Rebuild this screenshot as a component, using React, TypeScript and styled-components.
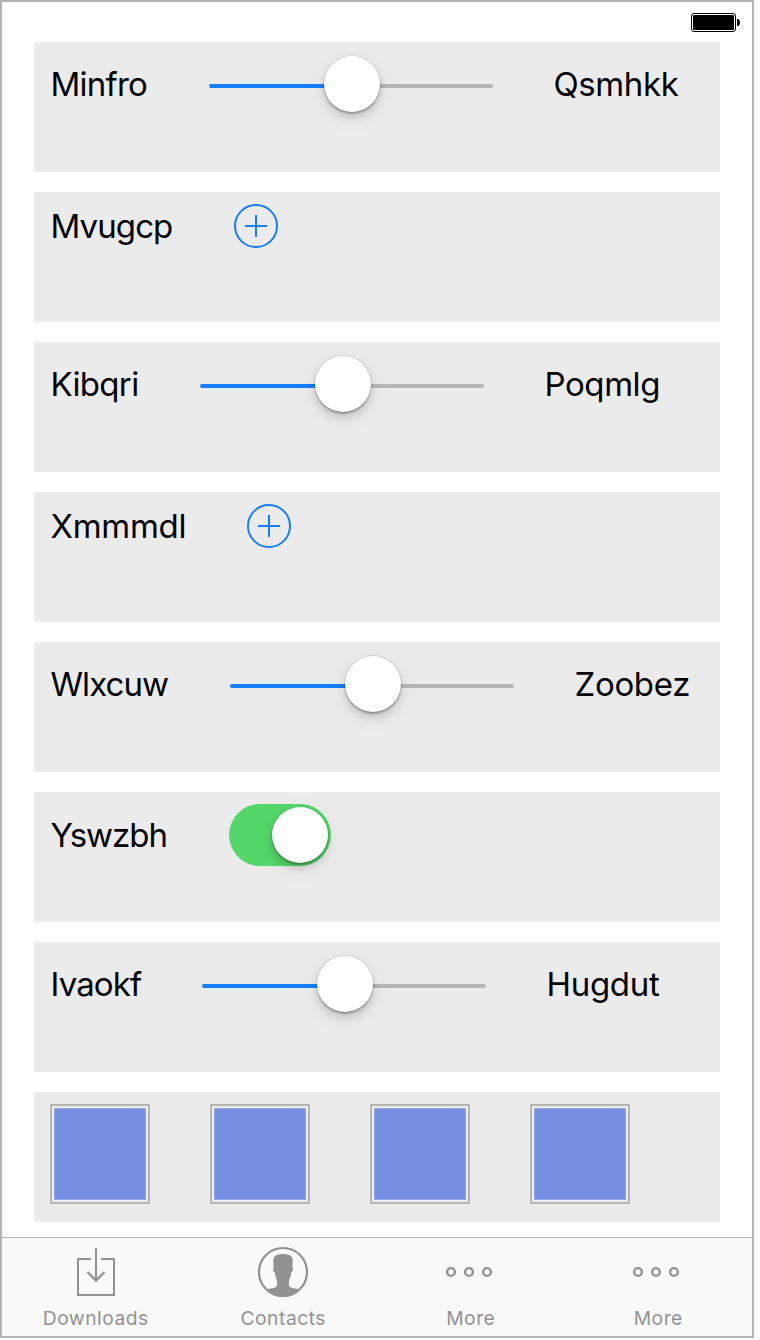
import React from "react";
import styled, { createGlobalStyle } from "styled-components";

const GlobalStyle = createGlobalStyle`
  * { box-sizing: border-box; }
  body { margin: 0; background: #fff; }
`;

const Phone = styled.div`
  display: flex;
  flex-direction: column;
  width: 754px;
  height: 1338px;
  border: 2px solid #b2b2b2;
  background: #fff;
  font-family: Inter, "Liberation Sans", sans-serif;
  color: #000;
`;

const StatusBar = styled.header`
  display: flex;
  justify-content: flex-end;
  height: 40px;
  padding: 11px 12px 0 0;
`;

const List = styled.main`
  display: flex;
  flex: 1;
  flex-direction: column;
  gap: 20px;
  padding: 0 32px;
`;

const Cell = styled.section`
  height: 130px;
  padding: 12px 16px;
  background: #ebebeb;
`;

const Row = styled.div`
  display: flex;
  align-items: center;
  gap: 60px;
`;

const Label = styled.span<{ $width: number; $spacing: number }>`
  flex: none;
  width: ${(p) => p.$width}px;
  padding-left: 0.5px;
  font-size: 33px;
  line-height: 40px;
  letter-spacing: ${(p) => p.$spacing}px;
  white-space: nowrap;
`;

const SliderBox = styled.div`
  display: flex;
  align-items: center;
  flex: none;
  width: 284px;
  height: 60px;
`;

const Track = styled.div<{ $filled?: boolean }>`
  flex: ${(p) => (p.$filled ? "0 0 143px" : "1")};
  height: 4px;
  margin-top: 4px;
  border-radius: ${(p) => (p.$filled ? "2px 0 0 2px" : "0 2px 2px 0")};
  background: ${(p) => (p.$filled ? "#157efb" : "#b6b6b6")};
`;

const Thumb = styled.div<{ $slider?: boolean }>`
  flex: none;
  width: 56px;
  height: 56px;
  margin: ${(p) => (p.$slider ? "0 -28px" : "0")};
  z-index: 1;
  border-radius: 50%;
  background: #fff;
  box-shadow: 0 0 0 1px rgba(0, 0, 0, 0.07), 0 2px 2px rgba(0, 0, 0, 0.24),
    0 6px 8px rgba(0, 0, 0, 0.12), 0 5px 22px rgba(0, 0, 0, 0.07);
`;

const Switch = styled.div`
  display: flex;
  justify-content: flex-end;
  width: 102px;
  height: 62px;
  padding: 3px;
  border-radius: 31px;
  background: #53d769;
`;

const Swatch = styled.div`
  width: 100px;
  height: 100px;
  padding: 1px;
  border: 2px solid #b7b7b7;
  background: #e6e6e6;
`;

const SwatchFill = styled.div`
  height: 100%;
  border: 1px solid #f1f4ff;
  background: #778fe2;
  box-shadow: inset 0 0 0 1px #94a7e9;
`;

const TabBar = styled.nav`
  display: flex;
  height: 99px;
  border-top: 1px solid #b2b2b2;
  background: #f9f9f9;
`;

const Tab = styled.div`
  display: flex;
  flex: 1;
  flex-direction: column;
  align-items: center;
  padding-top: 8px;
  color: #929292;
`;

const TabLabel = styled.span`
  margin-top: 8px;
  font-size: 19.3px;
  line-height: 24px;
  letter-spacing: 0.5px;
`;

const Battery = () => (
  <svg width="50" height="20" viewBox="0 0 50 20">
    <rect x="1.5" y="0.5" width="44" height="18" rx="2.5" fill="#fff" stroke="#000" />
    <rect x="3" y="2" width="41" height="15" rx="1" />
    <path d="M47 6h1c1.400.6 2 1.800 2 3.500s-.6 2.900-2 3.500h-1z" />
  </svg>
);

const Plus = () => (
  <svg width="44" height="44" viewBox="0 0 44 44" fill="none" stroke="#157efb" strokeWidth="2">
    <circle cx="22" cy="22" r="21" />
    <path d="M11 22h22M22 11v22" />
  </svg>
);

const DownloadIcon = () => (
  <svg width="50" height="52" viewBox="0 0 50 52" fill="none" stroke="currentColor" strokeWidth="2">
    <path d="M20 13H7v36h36V13H30M25 2v32" />
    <path d="M16.500 26l8.500 8.500l8.500-8.500" strokeWidth="2.4" />
  </svg>
);

const ContactIcon = () => (
  <svg width="50" height="52" viewBox="0 0 50 52">
    <circle cx="25" cy="26" r="24" fill="none" stroke="currentColor" strokeWidth="2.200" />
    <path
      fill="currentColor"
      d="M15.300 14.500C15.300 10 19 8 25 8s9.700 2 9.700 6.500l-.3 7c1.200.5.400 4.500-1.200 5-.3 3-1 5.500-2.200 7.500v5c0 1.800 1.500 2.600 3.500 3l8 1.500C38 48.500 32 51 25 51S12 48.500 7.500 43.500l8-1.500c2-.4 3.500-1.200 3.500-3v-5c-1.200-2-1.900-4.500-2.200-7.500-1.600-.5-2.400-4.500-1.200-5z"
    />
  </svg>
);

const MoreIcon = () => (
  <svg width="50" height="52" viewBox="0 0 50 52" fill="none" stroke="currentColor" strokeWidth="2.400">
    <circle cx="5" cy="26" r="3.900" />
    <circle cx="23" cy="26" r="3.900" />
    <circle cx="41" cy="26" r="3.900" />
  </svg>
);

const Slider = () => (
  <SliderBox>
    <Track $filled />
    <Thumb $slider />
    <Track />
  </SliderBox>
);

type Text = { text: string; width: number; spacing: number };
type Item = { kind: "slider" | "plus" | "switch"; label: Text; end?: Text };

const items: Item[] = [
  { kind: "slider", label: { text: "Minfro", width: 99, spacing: -0.76 }, end: { text: "Qsmhkk", width: 126, spacing: -0.4 } },
  { kind: "plus", label: { text: "Mvugcp", width: 124, spacing: -0.9 } },
  { kind: "slider", label: { text: "Kibqri", width: 90, spacing: -0.68 }, end: { text: "Poqmlg", width: 117, spacing: -0.42 } },
  { kind: "plus", label: { text: "Xmmmdl", width: 137, spacing: -0.28 } },
  { kind: "slider", label: { text: "Wlxcuw", width: 120, spacing: -0.92 }, end: { text: "Zoobez", width: 116, spacing: -0.32 } },
  { kind: "switch", label: { text: "Yswzbh", width: 119, spacing: -1.02 } },
  { kind: "slider", label: { text: "Ivaokf", width: 92, spacing: -0.88 }, end: { text: "Hugdut", width: 114, spacing: -0.32 } },
];

const tabs = [
  { text: "Downloads", Icon: DownloadIcon },
  { text: "Contacts", Icon: ContactIcon },
  { text: "More", Icon: MoreIcon },
  { text: "More", Icon: MoreIcon },
];

const CellLabel = ({ text, width, spacing }: Text) => (
  <Label $width={width} $spacing={spacing}>{text}</Label>
);

export default function App() {
  return (
    <>
      <GlobalStyle />
      <Phone>
        <StatusBar><Battery /></StatusBar>
        <List>
          {items.map((item) => (
            <Cell key={item.label.text}>
              <Row>
                <CellLabel {...item.label} />
                {item.kind === "slider" && <Slider />}
                {item.kind === "plus" && <Plus />}
                {item.kind === "switch" && <Switch><Thumb /></Switch>}
                {item.end && <CellLabel {...item.end} />}
              </Row>
            </Cell>
          ))}
          <Cell>
            <Row>
              {[0, 1, 2, 3].map((n) => (
                <Swatch key={n}><SwatchFill /></Swatch>
              ))}
            </Row>
          </Cell>
        </List>
        <TabBar>
          {tabs.map(({ text, Icon }, i) => (
            <Tab key={i}>
              <Icon />
              <TabLabel>{text}</TabLabel>
            </Tab>
          ))}
        </TabBar>
      </Phone>
    </>
  );
}
